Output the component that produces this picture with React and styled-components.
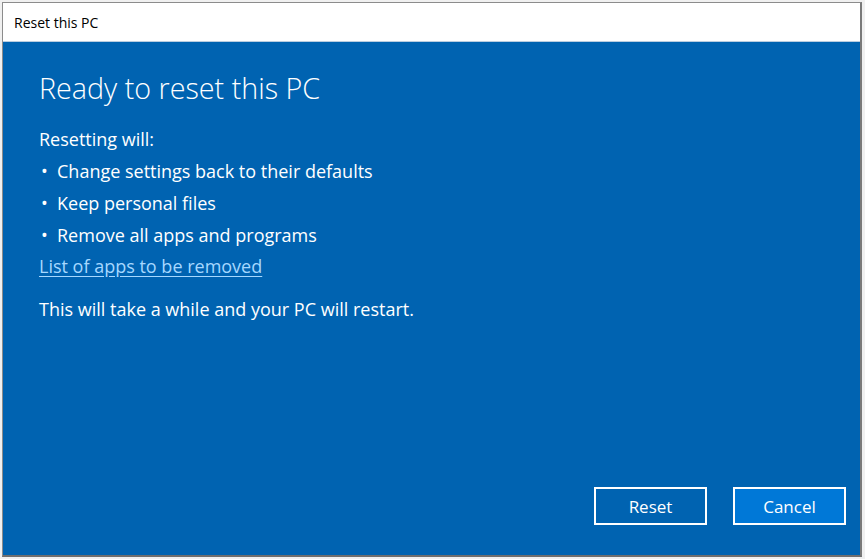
import styled, { createGlobalStyle } from "styled-components";

const GlobalStyle = createGlobalStyle`
  html, body {
    margin: 0;
    padding: 0;
    background: #f0f0f0;
    font-family: "Open Sans", "Noto Sans", sans-serif;
  }
`;

const Screen = styled.div`
  width: 865px;
  height: 559px;
  overflow: hidden;
  padding: 2px 2px 0 2px;
  box-sizing: border-box;
`;

const Window = styled.div`
  width: 860px;
  height: 555px;
  box-sizing: border-box;
  display: flex;
  flex-direction: column;
  border-left: 1px solid #8c8c8c;
  border-top: 1px solid #8c8c8c;
  border-right: 2px solid #7a7a7a;
  border-bottom: 2px solid #6e6e6e;
  background: #0063b1;
`;

const TitleBar = styled.div`
  height: 38px;
  flex-shrink: 0;
  background: #ffffff;
  border-bottom: 1px solid #b9cde0;
  display: flex;
  align-items: center;
  padding-left: 11px;
  font-size: 14px;
  color: #000;
`;

const Body = styled.div`
  flex: 1;
  display: flex;
  flex-direction: column;
  padding: 0 14px 30px 36px;
  color: #ffffff;
`;

const Heading = styled.h1`
  margin: 28px 0 0 0;
  font-size: 28.7px;
  font-weight: 300;
  line-height: 36px;
`;

const Text = styled.p`
  margin: ${({ $top }) => $top || 0}px 0 0 0;
  font-size: 18px;
  line-height: 32px;
`;

const List = styled.ul`
  list-style: none;
  margin: 0;
  padding: 0;
`;

const Item = styled.li`
  font-size: 18px;
  line-height: 32px;
  display: flex;
  &::before {
    content: "•";
    width: 18px;
    padding-left: 2px;
    box-sizing: border-box;
  }
`;

const LinkText = styled.a`
  align-self: flex-start;
  font-size: 18px;
  line-height: 30px;
  color: #a6d8ff;
  text-decoration: underline;
  text-underline-offset: 3px;
`;

const Footer = styled.div`
  margin-top: auto;
  display: flex;
  justify-content: flex-end;
  gap: 26px;
`;

const Button = styled.button`
  width: 113px;
  height: 38px;
  box-sizing: border-box;
  border: 2px solid #ffffff;
  background: ${({ $primary }) => ($primary ? "#0078d7" : "transparent")};
  color: #ffffff;
  font-family: inherit;
  font-size: 17px;
  padding: 0;
`;

export default function App() {
  return (
    <Screen>
      <GlobalStyle />
      <Window>
        <TitleBar>Reset this PC</TitleBar>
        <Body>
          <Heading>Ready to reset this PC</Heading>
          <Text $top={17}>Resetting will:</Text>
          <List>
            <Item>Change settings back to their defaults</Item>
            <Item>Keep personal files</Item>
            <Item>Remove all apps and programs</Item>
          </List>
          <LinkText href="#">List of apps to be removed</LinkText>
          <Text $top={12}>This will take a while and your PC will restart.</Text>
          <Footer>
            <Button>Reset</Button>
            <Button $primary>Cancel</Button>
          </Footer>
        </Body>
      </Window>
    </Screen>
  );
}
